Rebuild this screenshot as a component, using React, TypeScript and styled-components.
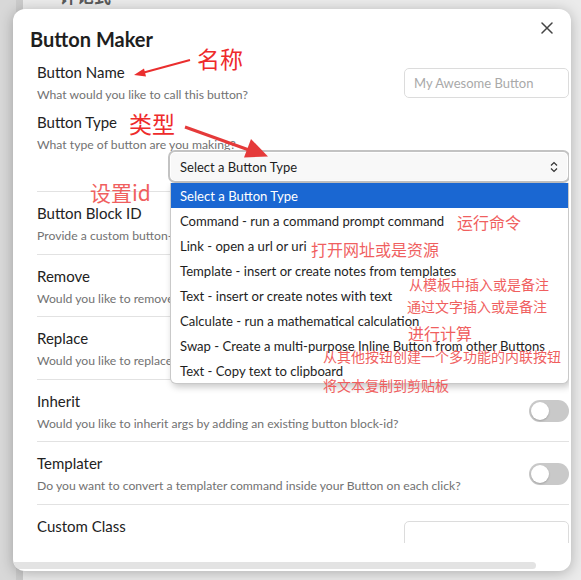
import React from "react";
import styled, { createGlobalStyle } from "styled-components";

const Global = createGlobalStyle`
  html, body { margin: 0; padding: 0; }
  body {
    background: #e2e2e2;
    font-family: Lato, "Noto Sans", "Noto Sans CJK SC", sans-serif;
    color: #222;
  }
`;

const Screen = styled.div`
  position: relative;
  width: 581px;
  height: 580px;
  overflow: hidden;
  display: flex;
  background: #e4e4e4;
`;

const LeftRail = styled.div`
  width: 16px;
  background: #d8d8d8;
`;

const RailEdge = styled.div`
  width: 7px;
  background: #cbcbcb;
`;

const Pane = styled.div`
  flex: 1;
  background: #ebebeb;
  padding-left: 37px;
`;

const PaneTitle = styled.div`
  margin-top: -17px;
  font-family: "Noto Sans CJK SC", sans-serif;
  font-size: 17px;
  font-weight: 700;
  color: #5a5a5a;
`;

const Modal = styled.div`
  position: absolute;
  left: 13px;
  top: 9px;
  width: 558px;
  height: 562px;
  background: #fff;
  border-radius: 12px;
  box-shadow: 0 2px 14px rgba(0, 0, 0, 0.26);
  overflow: hidden;
  display: flex;
  flex-direction: column;
`;

const CloseButton = styled.button`
  position: absolute;
  right: 13px;
  top: 12px;
  width: 22px;
  height: 14px;
  border: none;
  background: none;
  padding: 0;
  display: flex;
  align-items: center;
  justify-content: center;
  cursor: pointer;
`;

const Title = styled.h2`
  margin: 0;
  padding: 17px 0 0 17px;
  font-size: 20px;
  line-height: 26px;
  font-weight: 700;
  color: #1e1e1e;
`;

const ScrollArea = styled.div`
  height: 481px;
  padding: 10px 0 0 24px;
  width: 532px;
  overflow: hidden;
  display: flex;
  flex-direction: column;
  flex: none;
`;

const Footer = styled.div`
  flex: 1;
  display: flex;
  flex-direction: column;
  justify-content: flex-end;
  padding-bottom: 2px;
`;

const ScrollThumb = styled.div`
  width: 523px;
  height: 7px;
  background: #e3e3e3;
  border-radius: 0 4px 4px 0;
`;

const TopRow = styled.div`
  display: flex;
  align-items: center;
  justify-content: space-between;
`;

const SettingRow = styled.div`
  display: flex;
  align-items: center;
  justify-content: space-between;
  border-top: 1px solid #e2e2e2;
  padding: 11px 0 9.5px;
  flex: none;
`;

const Info = styled.div`
  display: flex;
  flex-direction: column;
  gap: 4px;
  white-space: nowrap;
`;

const Name = styled.div`
  font-size: 15px;
  line-height: 20px;
  color: #222;
`;

const Desc = styled.div`
  font-size: 12.2px;
  line-height: 17px;
  color: #727272;
`;

const TextInput = styled.input`
  width: 165px;
  height: 30px;
  box-sizing: border-box;
  border: 1px solid #dcdcdc;
  border-radius: 5px;
  padding: 0 9px;
  font-family: inherit;
  font-size: 13px;
  background: #fff;
  flex: none;
  &::placeholder {
    color: #a9a9a9;
  }
`;

const TypeBlock = styled.div`
  display: flex;
  flex-direction: column;
  padding: 9px 0 8px;
`;

const SelectWrap = styled.div`
  position: relative;
  margin: -3px -1px 0 131px;
  z-index: 5;
`;

const SelectBox = styled.div`
  height: 33px;
  box-sizing: border-box;
  border: 2px solid #c3c3c3;
  box-shadow: inset 0 0 0 1px #fff;
  border-radius: 7px;
  background: #f8f8f8;
  display: flex;
  align-items: center;
  justify-content: space-between;
  padding: 0 10px;
  font-size: 13px;
  color: #1e1e1e;
`;

const Dropdown = styled.ul`
  position: absolute;
  left: 2px;
  right: 1px;
  top: 33px;
  margin: 0;
  padding: 0;
  list-style: none;
  background: #fff;
  border: 1px solid #c9c9c9;
  border-top: none;
  border-radius: 0 0 6px 6px;
  box-shadow: 2px 3px 7px rgba(0, 0, 0, 0.22);
  overflow: hidden;
`;

const Option = styled.li<{ $active?: boolean }>`
  height: 23px;
  padding-top: 2px;
  line-height: 23px;
  padding-left: 9px;
  font-size: 13.1px;
  white-space: nowrap;
  color: ${(p) => (p.$active ? "#fff" : "#1e1e1e")};
  background: ${(p) => (p.$active ? "#1a67d2" : "transparent")};
`;

const Toggle = styled.div`
  width: 40px;
  height: 22px;
  border-radius: 11px;
  background: #c9c9c9;
  position: relative;
  flex: none;
  &::after {
    content: "";
    position: absolute;
    left: 2px;
    top: 2px;
    width: 18px;
    height: 18px;
    border-radius: 50%;
    background: #fff;
    box-shadow: 0 1px 2px rgba(0, 0, 0, 0.2);
  }
`;

const AnnotationLayer = styled.div`
  position: absolute;
  inset: 0;
  pointer-events: none;
  z-index: 20;
`;

const Note = styled.span<{ $x: number; $y: number; $size: number; $strong?: boolean }>`
  position: absolute;
  left: ${(p) => p.$x}px;
  top: ${(p) => p.$y}px;
  font-family: "Noto Sans CJK SC", sans-serif;
  font-size: ${(p) => p.$size}px;
  line-height: 1;
  white-space: nowrap;
  color: ${(p) => (p.$strong ? "#ee2b2b" : "#f05f5f")};
`;

const ArrowSvg = styled.svg`
  position: absolute;
  inset: 0;
`;

const options = [
  "Select a Button Type",
  "Command - run a command prompt command",
  "Link - open a url or uri",
  "Template - insert or create notes from templates",
  "Text - insert or create notes with text",
  "Calculate - run a mathematical calculation",
  "Swap - Create a multi-purpose Inline Button from other Buttons",
  "Text - Copy text to clipboard",
];

type Setting = { name: string; desc: string; control: "toggle" | "input" };

const settings: Setting[] = [
  { name: "Button Block ID", desc: "Provide a custom button-id that you can use in other buttons", control: "input" },
  { name: "Remove", desc: "Would you like to remove the button after it is clicked?", control: "toggle" },
  { name: "Replace", desc: "Would you like to replace a note block with the button output?", control: "toggle" },
  { name: "Inherit", desc: "Would you like to inherit args by adding an existing button block-id?", control: "toggle" },
  { name: "Templater", desc: "Do you want to convert a templater command inside your Button on each click?", control: "toggle" },
  { name: "Custom Class", desc: "Add a custom class for button styling", control: "input" },
];

const notes = [
  { t: "名称", x: 197, y: 47, s: 23, strong: true },
  { t: "类型", x: 129, y: 112, s: 23, strong: true },
  { t: "设置id", x: 90, y: 182, s: 21 },
  { t: "运行命令", x: 457, y: 214, s: 16 },
  { t: "打开网址或是资源", x: 311, y: 241, s: 16 },
  { t: "从模板中插入或是备注", x: 409, y: 277, s: 14 },
  { t: "通过文字插入或是备注", x: 407, y: 299, s: 14 },
  { t: "进行计算", x: 408, y: 325, s: 16 },
  { t: "从其他按钮创建一个多功能的内联按钮", x: 323, y: 349, s: 14 },
  { t: "将文本复制到剪贴板", x: 323, y: 378, s: 14 },
];

export default function App() {
  return (
    <>
      <Global />
      <Screen>
        <LeftRail />
        <RailEdge />
        <Pane>
          <PaneTitle>评论式</PaneTitle>
        </Pane>

        <Modal>
          <CloseButton aria-label="Close">
            <svg width="12" height="12" viewBox="0 0 12 12">
              <path d="M1 1 L11 11 M11 1 L1 11" stroke="#444" strokeWidth="1.5" strokeLinecap="round" />
            </svg>
          </CloseButton>
          <Title>Button Maker</Title>
          <ScrollArea>
            <TopRow>
              <Info>
                <Name>Button Name</Name>
                <Desc>What would you like to call this button?</Desc>
              </Info>
              <TextInput placeholder="My Awesome Button" />
            </TopRow>
            <TypeBlock>
              <Info>
                <Name>Button Type</Name>
                <Desc>What type of button are you making?</Desc>
              </Info>
              <SelectWrap>
                <SelectBox>
                  <span>Select a Button Type</span>
                  <svg width="8" height="12" viewBox="0 0 8 12">
                    <path d="M1 4.5 L4 1.5 L7 4.5 M1 7.5 L4 10.5 L7 7.5" stroke="#333" strokeWidth="1.2" fill="none" />
                  </svg>
                </SelectBox>
                <Dropdown>
                  {options.map((o, i) => (
                    <Option key={i} $active={i === 0}>
                      {o}
                    </Option>
                  ))}
                </Dropdown>
              </SelectWrap>
            </TypeBlock>
            {settings.map((s) => (
              <SettingRow key={s.name}>
                <Info>
                  <Name>{s.name}</Name>
                  <Desc>{s.desc}</Desc>
                </Info>
                {s.control === "toggle" ? <Toggle /> : <TextInput />}
              </SettingRow>
            ))}
          </ScrollArea>
          <Footer>
            <ScrollThumb />
          </Footer>
        </Modal>

        <AnnotationLayer>
          <ArrowSvg width="581" height="580" viewBox="0 0 581 580">
            <path d="M190 60 L142 73" stroke="#ea2e2e" strokeWidth="2" />
            <path d="M134 75 L144 68.5 L146 76.5 Z" fill="#ea2e2e" />
            <path d="M185 127 L249 150" stroke="#e53a3a" strokeWidth="3" />
            <path d="M268 156.5 L244 157.5 L251 139 Z" fill="#e53a3a" />
          </ArrowSvg>
          {notes.map((n) => (
            <Note key={n.t} $x={n.x} $y={n.y} $size={n.s} $strong={n.strong}>
              {n.t}
            </Note>
          ))}
        </AnnotationLayer>
      </Screen>
    </>
  );
}
